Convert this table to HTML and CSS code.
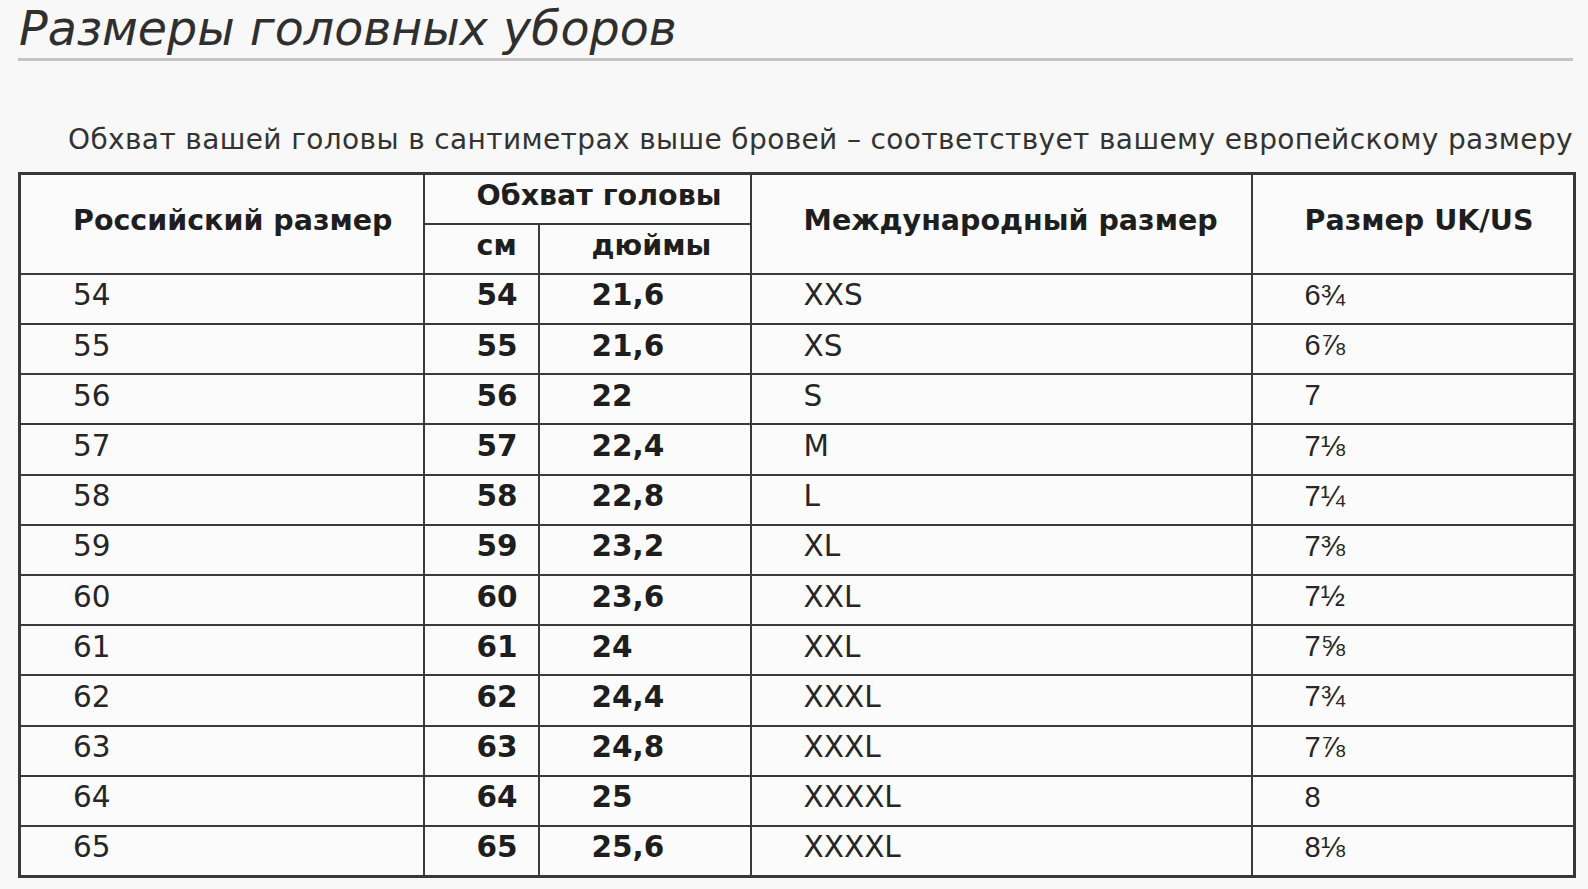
FILE: index.html
```html
<!DOCTYPE html>
<html lang="ru">
<head>
<meta charset="utf-8">
<title>Размеры головных уборов</title>
<link rel="stylesheet" href="styles.css">
</head>
<body>
<div class="page">
  <h1 class="title">Размеры головных уборов</h1>
  <p class="note">Обхват вашей головы в сантиметрах выше бровей – соответствует вашему европейскому размеру</p>
  <table class="sizes">
    <colgroup>
      <col class="c1"><col class="c2"><col class="c3"><col class="c4"><col class="c5">
    </colgroup>
    <thead>
      <tr>
        <th rowspan="2">Российский размер</th>
        <th colspan="2">Обхват головы</th>
        <th rowspan="2">Международный размер</th>
        <th rowspan="2">Размер UK/US</th>
      </tr>
      <tr>
        <th>см</th>
        <th>дюймы</th>
      </tr>
    </thead>
    <tbody>
      <tr><td>54</td><td class="b">54</td><td class="b">21,6</td><td>XXS</td><td class="fr">6¾</td></tr>
      <tr><td>55</td><td class="b">55</td><td class="b">21,6</td><td>XS</td><td class="fr">6⅞</td></tr>
      <tr><td>56</td><td class="b">56</td><td class="b">22</td><td>S</td><td class="fr">7</td></tr>
      <tr><td>57</td><td class="b">57</td><td class="b">22,4</td><td>M</td><td class="fr">7⅛</td></tr>
      <tr><td>58</td><td class="b">58</td><td class="b">22,8</td><td>L</td><td class="fr">7¼</td></tr>
      <tr><td>59</td><td class="b">59</td><td class="b">23,2</td><td>XL</td><td class="fr">7⅜</td></tr>
      <tr><td>60</td><td class="b">60</td><td class="b">23,6</td><td>XXL</td><td class="fr">7½</td></tr>
      <tr><td>61</td><td class="b">61</td><td class="b">24</td><td>XXL</td><td class="fr">7⅝</td></tr>
      <tr><td>62</td><td class="b">62</td><td class="b">24,4</td><td>XXXL</td><td class="fr">7¾</td></tr>
      <tr><td>63</td><td class="b">63</td><td class="b">24,8</td><td>XXXL</td><td class="fr">7⅞</td></tr>
      <tr><td>64</td><td class="b">64</td><td class="b">25</td><td>XXXXL</td><td class="fr">8</td></tr>
      <tr><td>65</td><td class="b">65</td><td class="b">25,6</td><td>XXXXL</td><td class="fr">8⅛</td></tr>
    </tbody>
  </table>
</div>
</body>
</html>
```

FILE: styles.css
```css
html, body {
  margin: 0;
  padding: 0;
  background: #f8f8f8;
}
body {
  font-family: "DejaVu Sans", Verdana, sans-serif;
  color: #262626;
}
.page {
  width: 1555px;
  padding: 0 0 0 18px;
}
.title {
  margin: 0;
  font-weight: normal;
  font-style: italic;
  font-size: 47.5px;
  line-height: 58px;
  color: #2f2f2f;
  padding-left: 1px;
  border-bottom: 3px solid #c4c4c4;
}
.note {
  margin: 62px 0 15px;
  text-align: right;
  font-size: 28px;
  letter-spacing: 0.37px;
  line-height: 34px;
  color: #333;
}
.sizes {
  width: 1555px;
  border-collapse: collapse;
  table-layout: fixed;
  background: #fbfbfb;
  border: 3px solid #383838;
  font-size: 29.5px;
}
.c1 { width: 404px; }
.c2 { width: 115px; }
.c3 { width: 212px; }
.c4 { width: 501px; }
.c5 { width: 323px; }
.sizes th, .sizes td {
  border: 2px solid #3a3a3a;
  height: 50.2px;
  padding: 0 0 7px 52px;
  box-sizing: border-box;
  text-align: left;
  vertical-align: middle;
  white-space: nowrap;
}
.sizes th {
  font-weight: bold;
  color: #1e1e1e;
  font-size: 28.5px;
}
.sizes td.b {
  font-weight: bold;
  color: #1e1e1e;
}
.sizes td.fr {
  font-family: "Liberation Sans", Arial, sans-serif;
  font-size: 29px;
}
```
